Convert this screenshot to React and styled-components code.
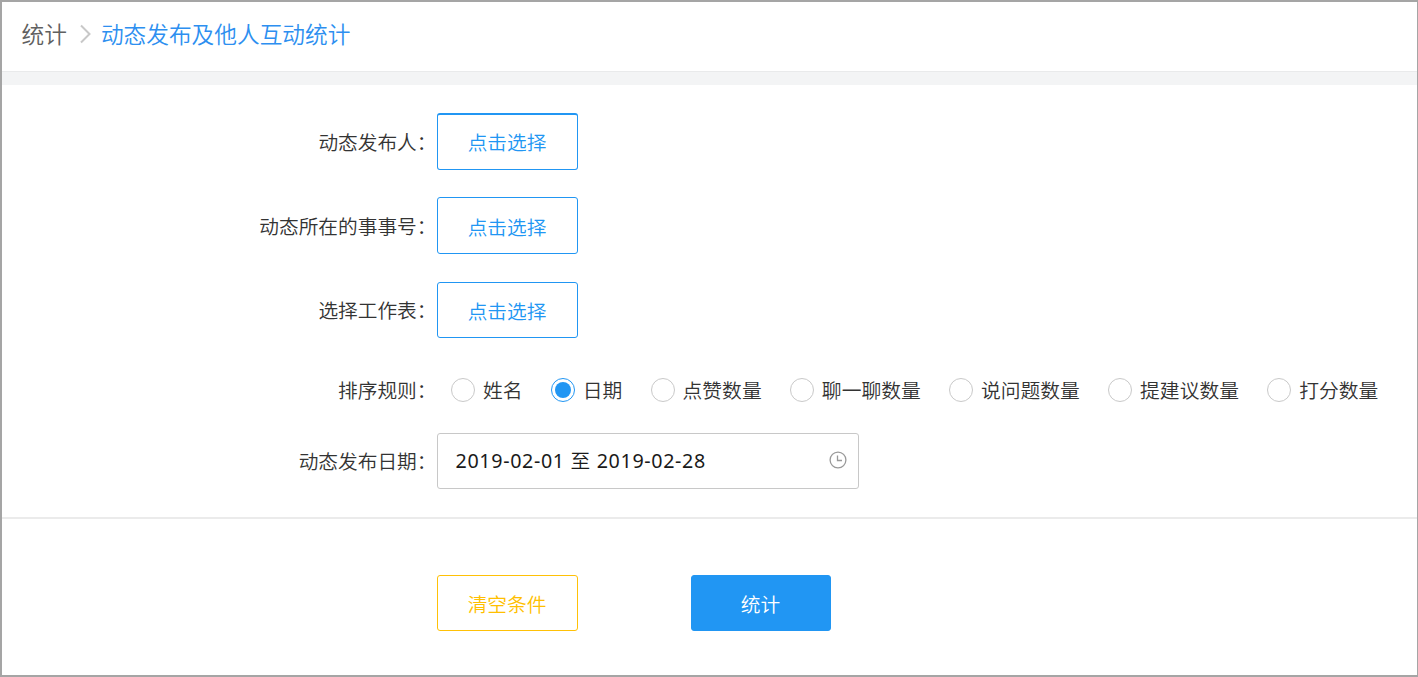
import React, { useState } from "react"
import styled, { createGlobalStyle } from "styled-components"

const GlobalStyle = createGlobalStyle`
* {
    box-sizing: border-box;
}
body {
    margin: 0;
    background: #fff;
    font-family: "Noto Sans CJK SC", sans-serif;
    font-weight: 350;
}
`

const Page = styled.div`
    height: 677px;
    overflow: hidden;
    display: flex;
    flex-direction: column;
    border: 2px solid #a5a5a5;
    border-right-width: 1px;
`

const Breadcrumb = styled.nav`
    height: 69px;
    flex: none;
    display: flex;
    align-items: center;
    padding: 0 0 5px 19.5px;
    font-size: 22.7px;
    line-height: 32px;
    color: #606060;
    svg {
        margin: 0 8px 0 11px;
    }
`

const Current = styled.span`
    color: #2d8ff0;
`

const Band = styled.div`
    height: 14px;
    flex: none;
    background: #f3f4f5;
    border-top: 1px solid #e9eaeb;
`

const Form = styled.div`
    height: 432px;
    flex: none;
    padding-top: 28px;
`

const Row = styled.div`
    display: flex;
    align-items: center;
    height: ${({ $height }) => $height || 57}px;
    margin-bottom: ${({ $gap }) => $gap || 0}px;
`

const Label = styled.div`
    width: 434.5px;
    margin-right: 0.5px;
    flex: none;
    text-align: right;
    font-size: 19.7px;
    line-height: 28px;
    color: #333;
`

const colors = {
    outline: { text: "#2196f3", border: "#2196f3", bg: "#fff" },
    warning: { text: "#ffbf00", border: "#ffc107", bg: "#fff" },
    primary: { text: "#fff", border: "#2196f3", bg: "#2196f3" },
}

const Button = styled.button`
    width: ${({ $width }) => $width || 141}px;
    height: 100%;
    padding: ${({ $thickTop }) => ($thickTop ? 0 : 2)}px 1px 0 0;
    border: 1px solid ${({ $kind }) => colors[$kind].border};
    border-top-width: ${({ $thickTop }) => ($thickTop ? 2 : 1)}px;
    border-radius: 3px;
    background: ${({ $kind }) => colors[$kind].bg};
    color: ${({ $kind }) => colors[$kind].text};
    font: inherit;
    font-size: 19.7px;
    line-height: 28px;
`

const RadioGroup = styled.div`
    display: flex;
    gap: 28.2px;
    padding-left: 14px;
`

const Option = styled.label`
    display: flex;
    align-items: center;
    gap: 8px;
    flex: none;
    font-size: 19.8px;
    line-height: 28px;
    color: #333;
    white-space: nowrap;
`

const Radio = styled.input`
    appearance: none;
    width: 24px;
    height: 24px;
    margin: 0;
    flex: none;
    border: 1px solid #c9c9c9;
    border-radius: 50%;
    background: #fff;
    &:checked {
        border-color: #2196f3;
        background: #2196f3;
        background-clip: content-box;
        padding: 3px;
    }
`

const DateBox = styled.div`
    width: 422px;
    height: 56px;
    display: flex;
    align-items: center;
    justify-content: space-between;
    padding: 0 11px 3px 17.5px;
    border: 1px solid #c8c8c8;
    border-radius: 3px;
    font-family: "Noto Sans", "Noto Sans CJK SC", sans-serif;
    font-weight: 400;
    font-size: 19.7px;
    letter-spacing: 0.65px;
    color: #1a1a1a;
`

const To = styled.span`
    font-weight: 350;
`

const Actions = styled.div`
    height: 114px;
    display: flex;
    gap: 113px;
    padding: 56px 0 0 435px;
    border-top: 2px solid #ebebeb;
`

const pickers = [
    { label: "动态发布人", height: 57, gap: 27 },
    { label: "动态所在的事事号", height: 57, gap: 28 },
    { label: "选择工作表", height: 56, gap: 38 },
]

const sorts = ["姓名", "日期", "点赞数量", "聊一聊数量", "说问题数量", "提建议数量", "打分数量"]

function Chevron() {
    return (
        <svg width="15" height="20" viewBox="0 0 15 20" fill="none" stroke="#c8c8c8" strokeWidth="2">
            <path d="M3 1.5 L11.5 10 L3 18.5" />
        </svg>
    )
}

function Clock() {
    return (
        <svg width="18" height="18" viewBox="0 0 18 18" fill="none" stroke="#999" strokeWidth="1.3">
            <circle cx="9" cy="9" r="7.9" />
            <path d="M8.5 4.5 V9.5 H13" />
        </svg>
    )
}

export default function App() {
    const [sort, setSort] = useState("日期")
    return (
        <>
            <GlobalStyle />
            <Page>
                <Breadcrumb>
                    <span>统计</span>
                    <Chevron />
                    <Current>动态发布及他人互动统计</Current>
                </Breadcrumb>
                <Band />
                <Form>
                    {pickers.map((item, i) => (
                        <Row key={item.label} $height={item.height} $gap={item.gap}>
                            <Label>{item.label}：</Label>
                            <Button $kind="outline" $thickTop={i === 0}>点击选择</Button>
                        </Row>
                    ))}
                    <Row $height={28} $gap={29}>
                        <Label>排序规则：</Label>
                        <RadioGroup>
                            {sorts.map((name) => (
                                <Option key={name}>
                                    <Radio type="radio" name="sort" checked={sort === name} onChange={() => setSort(name)} />
                                    {name}
                                </Option>
                            ))}
                        </RadioGroup>
                    </Row>
                    <Row $height={56}>
                        <Label>动态发布日期：</Label>
                        <DateBox>
                            <span>2019-02-01 <To>至</To> 2019-02-28</span>
                            <Clock />
                        </DateBox>
                    </Row>
                </Form>
                <Actions>
                    <Button $kind="warning">清空条件</Button>
                    <Button $kind="primary" $width={140}>统计</Button>
                </Actions>
            </Page>
        </>
    )
}
